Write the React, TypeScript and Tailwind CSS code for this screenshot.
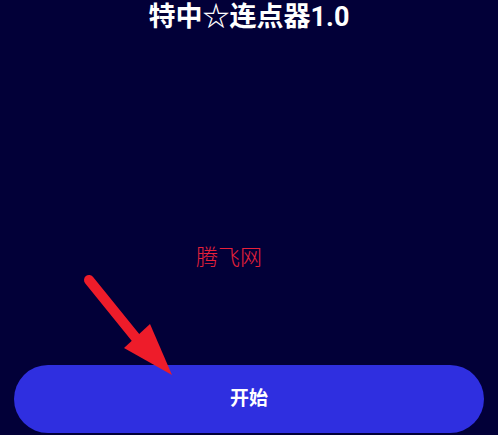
// Clicker start screen: title, watermark text, start button with a pointer arrow
export default function App() {
    return (
        <div
            className="relative flex h-[435px] w-[498px] flex-col overflow-hidden bg-[#020038]"
            style={{ fontFamily: 'Roboto, "Noto Sans CJK SC", sans-serif' }}
        >
            {/* Title */}
            <h1 className="mt-[1px] text-center text-[27px] font-bold leading-[32px] text-white">
                特中☆连点器1.0
            </h1>

            {/* Watermark */}
            <div className="mt-[214px] pl-[196px] text-[22px] font-light leading-none text-[#e8203a]">
                腾飞网
            </div>

            <div className="flex-1" />

            {/* Start button */}
            <div className="px-[14px] pb-[2px]">
                <button className="flex h-[68px] w-full items-center justify-center rounded-full bg-[#2f2fe0] text-[19px] font-bold text-white">
                    开始
                </button>
            </div>

            {/* Arrow pointing at the button */}
            <svg className="absolute left-0 top-0" width="498" height="435" viewBox="0 0 498 435">
                <line x1="89" y1="280" x2="140" y2="343" stroke="#ee1c2a" strokeWidth="10" strokeLinecap="round" />
                <polygon points="124,348 150,324 172,375" fill="#ee1c2a" />
            </svg>
        </div>
    )
}
